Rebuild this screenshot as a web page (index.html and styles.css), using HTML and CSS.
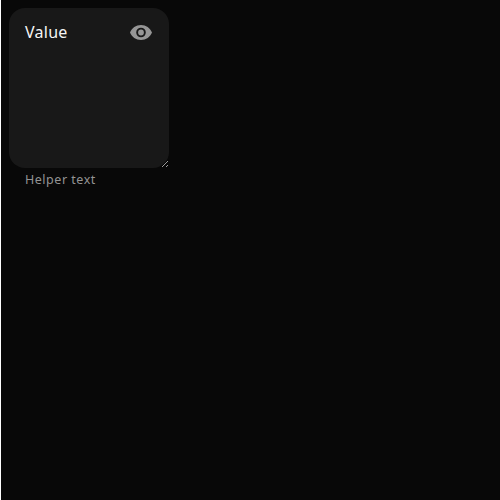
FILE: index.html
```
<!DOCTYPE html>
<html lang="en">
<head>
<meta charset="utf-8">
<title>Text area</title>
<link rel="stylesheet" href="styles.css">
</head>
<body>
<main class="page">
  <div class="field">
    <div class="control">
      <textarea class="input" aria-label="Value">Value</textarea>
      <svg class="icon" viewBox="0 0 24 24" aria-hidden="true"><path fill-rule="evenodd" d="M12 5C7 5 2.73 8 1 12.5 2.73 17 7 20 12 20s9.27-3 11-7.5C21.27 8 17 5 12 5Zm0 12.3a4.8 4.8 0 1 1 0-9.6 4.8 4.8 0 0 1 0 9.6Zm0-1.9a2.9 2.9 0 1 0 0-5.8 2.9 2.9 0 0 0 0 5.8Z"/></svg>
    </div>
    <div class="helper">Helper text</div>
  </div>
</main>
</body>
</html>
```
FILE: styles.css
```
* { box-sizing: border-box; }
body { margin: 0; background: #fff; }
.page {
  min-height: 100vh;
  margin-left: 1px;
  padding: 8px;
  background: #080808;
  font-family: "Noto Sans", sans-serif;
}
.field { width: 160px; }
.control { position: relative; height: 160px; }
.input {
  display: block;
  width: 160px;
  height: 160px;
  padding: 13px 44px 13px 16px;
  border: 0;
  border-radius: 16px;
  outline: 0;
  background: #181818;
  color: #f5f5f5;
  font: 16px/22px "Noto Sans", sans-serif;
  letter-spacing: .25px;
  resize: both;
}
.icon {
  position: absolute;
  top: 12px;
  right: 16px;
  width: 24px;
  height: 24px;
  fill: #969696;
}
.helper {
  padding: 4px 16px;
  color: #949494;
  font-size: 12.5px;
  line-height: 16px;
  letter-spacing: .52px;
}
```
